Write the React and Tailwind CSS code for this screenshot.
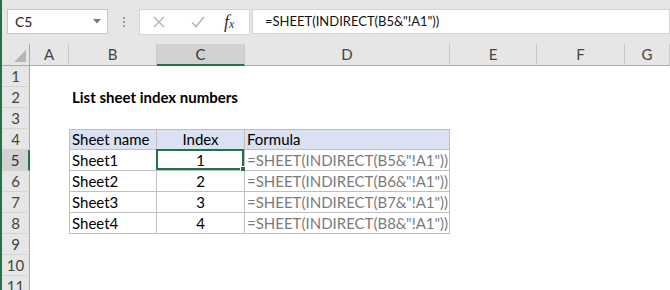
import React from 'react';

const font = { fontFamily: '"Lato", "Liberation Sans", sans-serif' };

const letters = ['A', 'B', 'C', 'D', 'E', 'F', 'G'];

const rows = [
    { n: 1 },
    { n: 2, title: 'List sheet index numbers' },
    { n: 3 },
    { n: 4, head: true, b: 'Sheet name', c: 'Index', d: 'Formula' },
    { n: 5, b: 'Sheet1', c: '1', d: '=SHEET(INDIRECT(B5&"!A1"))', active: true },
    { n: 6, b: 'Sheet2', c: '2', d: '=SHEET(INDIRECT(B6&"!A1"))' },
    { n: 7, b: 'Sheet3', c: '3', d: '=SHEET(INDIRECT(B7&"!A1"))' },
    { n: 8, b: 'Sheet4', c: '4', d: '=SHEET(INDIRECT(B8&"!A1"))' },
    { n: 9 },
    { n: 10 },
    { n: 11 },
];

function Toolbar() {
    return (
        <div className="h-[44px] bg-[#e6e6e6] flex items-start pt-[9px] pl-[5px]">
            {/* Name box */}
            <div className="w-[101px] h-[25px] bg-white border border-[#c6c6c6] flex items-center justify-between pl-[7px] pr-[6px]">
                <span className="text-[14px] text-[#222]">C5</span>
                <svg width="8" height="5" viewBox="0 0 8 5"><path d="M0 0h8L4 4.5z" fill="#7a7a7a" /></svg>
            </div>
            {/* Grip dots */}
            <div className="w-[31px] h-[25px] flex flex-col items-center justify-center gap-[2px]">
                <span className="w-[2px] h-[2px] bg-[#9a9a9a]" />
                <span className="w-[2px] h-[2px] bg-[#9a9a9a]" />
                <span className="w-[2px] h-[2px] bg-[#9a9a9a]" />
            </div>
            {/* Cancel / enter / fx */}
            <div className="w-[111px] h-[26px] bg-white border border-[#d4d4d4] flex items-center">
                <svg className="ml-[13px]" width="12" height="12" viewBox="0 0 12 12"><path d="M1 1l10 10M11 1L1 11" stroke="#b4b4b4" strokeWidth="1.4" /></svg>
                <svg className="ml-[26px]" width="14" height="12" viewBox="0 0 14 12"><path d="M1 6.5l4 4L13 1" stroke="#b4b4b4" strokeWidth="1.6" fill="none" /></svg>
                <span className="ml-[19px] text-[#333] italic text-[18px] leading-none" style={{ fontFamily: '"Liberation Serif", serif' }}>
                    f<span className="text-[12px]">x</span>
                </span>
            </div>
            {/* Formula input */}
            <div className="ml-[2px] flex-1 h-[25px] bg-white border border-[#d4d4d4] flex items-center pl-[12px]">
                <span className="text-[13px] text-[#111]">=SHEET(INDIRECT(B5&"!A1"))</span>
            </div>
        </div>
    );
}

function Cell({ row, col }) {
    const inTable = row.n >= 4 && row.n <= 8 && col >= 1 && col <= 3;
    if (!inTable) {
        if (col === 1 && row.title) {
            return (
                <div className="relative h-[21px] flex items-center pl-[3px] whitespace-nowrap">
                    <span className="font-bold text-[15px] text-black">{row.title}</span>
                </div>
            );
        }
        return <div className="h-[21px] bg-white" />;
    }
    const value = col === 1 ? row.b : col === 2 ? row.c : row.d;
    return (
        <div
            className={`relative h-[21px] flex items-center border-r border-b border-[#bfbfbf] ${row.head ? 'bg-[#d9e1f2] border-t' : 'bg-white'} ${col === 1 ? 'border-l' : ''} ${col === 2 ? 'justify-center' : 'pl-[2px]'}`}
        >
            <span className={`text-[15px] whitespace-nowrap ${col === 3 && !row.head ? 'text-[#7b7b7b]' : 'text-black'}`}>{value}</span>
            {row.active && col === 2 && (
                <div className="absolute -left-[1px] -top-[1px] right-0 bottom-0 border-2 border-[#217346]">
                    <div className="absolute -right-[4px] -bottom-[4px] w-[6px] h-[6px] bg-[#217346] border border-white" />
                </div>
            )}
        </div>
    );
}

export default function App() {
    return (
        <div className="w-[670px] h-[290px] overflow-hidden bg-white border-l-2 border-[#217346]" style={font}>
            <Toolbar />
            <div className="grid grid-cols-[28px_39px_88px_88px_205px_87px_88px_1fr]">
                {/* Column headers */}
                <div className="h-[22px] bg-[#e6e6e6] border-r border-b border-[#ababab] flex items-end justify-end pr-[3px] pb-[3px]">
                    <svg width="12" height="12" viewBox="0 0 12 12"><path d="M12 0V12H0z" fill="#b5b5b5" /></svg>
                </div>
                {letters.map((l) => (
                    <div
                        key={l}
                        className={`h-[22px] flex items-center justify-center text-[15px] ${l === 'C' ? 'bg-[#d2d2d2] border-b-2 border-b-[#217346] text-[#333] border-r border-r-[#c8c8c8]' : 'bg-[#e6e6e6] border-b border-b-[#ababab] text-[#444] border-r border-r-[#c8c8c8]'}`}
                    >
                        {l}
                    </div>
                ))}
                {rows.map((row) => (
                    <React.Fragment key={row.n}>
                        <div
                            className={`h-[21px] flex items-center justify-center text-[15px] border-b border-b-[#d4d4d4] ${row.active ? 'bg-[#d2d2d2] text-[#333] border-r-2 border-r-[#217346]' : 'bg-[#e6e6e6] text-[#444] border-r border-r-[#ababab]'}`}
                        >
                            {row.n}
                        </div>
                        {[0, 1, 2, 3, 4, 5, 6].map((c) => (
                            <Cell key={c} row={row} col={c} />
                        ))}
                    </React.Fragment>
                ))}
            </div>
        </div>
    );
}
